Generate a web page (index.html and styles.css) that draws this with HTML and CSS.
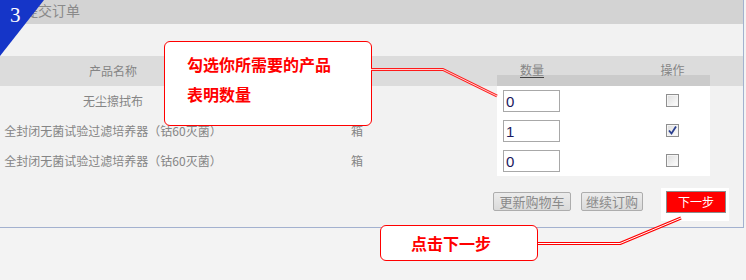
FILE: index.html
```html
<!DOCTYPE html>
<html lang="zh">
<head>
<meta charset="utf-8">
<title>提交订单</title>
<link rel="stylesheet" href="styles.css">
</head>
<body>
<div class="panel">
  <div class="topbar"><span class="step-title">提交订单</span></div>
  <div class="spacer"></div>
  <div class="grid">
    <div class="th name">产品名称</div>
    <div class="th unit"></div>
    <div class="th qty strip"><span class="ul">数量</span></div>
    <div class="th op strip">操作</div>
    <div class="th rest"></div>

    <div class="td name">无尘擦拭布</div>
    <div class="td unit">箱</div>
    <div class="td qty white"><input class="num" type="text" value="0"></div>
    <div class="td op white"><span class="cb"></span></div>
    <div class="td rest"></div>

    <div class="td name">全封闭无菌试验过滤培养器（钴60灭菌）</div>
    <div class="td unit">箱</div>
    <div class="td qty white"><input class="num" type="text" value="1"></div>
    <div class="td op white"><span class="cb checked"><svg width="11" height="11" viewBox="0 0 11 11"><path d="M2 5.5 L4.5 8.5 L9 1.5" fill="none" stroke="#2a3f8f" stroke-width="1.8"/></svg></span></div>
    <div class="td rest"></div>

    <div class="td name">全封闭无菌试验过滤培养器（钴60灭菌）</div>
    <div class="td unit">箱</div>
    <div class="td qty white"><input class="num" type="text" value="0"></div>
    <div class="td op white"><span class="cb"></span></div>
    <div class="td rest"></div>
  </div>
  <div class="footer">
    <button class="btn btn-update">更新购物车</button>
    <button class="btn btn-continue">继续订购</button>
    <div class="next-wrap"><button class="btn-next">下一步</button></div>
  </div>
</div>

<div class="badge"><span class="badge-num">3</span></div>

<div class="callout callout-1">勾选你所需要的产品<br>表明数量</div>
<div class="callout callout-2">点击下一步</div>

<svg class="connectors" width="746" height="280" viewBox="0 0 746 280">
  <path d="M371 69.5 L443 69.5 L497 96" fill="none" stroke="#ff1a1a" stroke-width="3" stroke-linejoin="round"/>
  <path d="M371 69.5 L443 69.5 L497 96" fill="none" stroke="#ffd0d0" stroke-width="1" stroke-linejoin="round"/>
  <path d="M538 243.5 L620 243.5 L681 218" fill="none" stroke="#ff0000" stroke-width="3" stroke-linejoin="round"/>
  <path d="M538 243.5 L620 243.5 L681 218" fill="none" stroke="#ffffff" stroke-width="1" stroke-linejoin="round"/>
</svg>
</body>
</html>
```

FILE: styles.css
```css
* { box-sizing: border-box; }
html, body {
  margin: 0;
  padding: 0;
  background: #f3f3f3;
  font-family: "Noto Sans CJK SC", "Noto Sans", sans-serif;
  color: #858585;
  font-size: 12px;
  width: 746px;
  height: 280px;
  overflow: hidden;
  position: relative;
}
.panel {
  width: 744px;
  height: 228px;
  background: #f2f2f2;
  border-right: 1px solid #a3b1cf;
  border-bottom: 1px solid #a3b1cf;
  display: flex;
  flex-direction: column;
}
.topbar {
  height: 24px;
  background: #d3d3d3;
  padding-left: 24px;
  line-height: 20px;
  font-size: 14px;
  color: #8a8a8a;
}
.spacer { height: 32px; }
.grid {
  display: grid;
  grid-template-columns: 226px 271px 138px 75px 33px;
  grid-template-rows: 30px 30px 30px 30px;
}
.th {
  background: #dcdcdc;
  line-height: 30px;
  height: 30px;
}
.th.name { text-align: center; }
.th.qty { padding-left: 23px; line-height: 28px; }
.th.op { text-align: center; line-height: 28px; }
.th.strip {
  background: linear-gradient(to bottom, #dcdcdc 0, #dcdcdc 19px, #cbcbcb 19px, #cbcbcb 100%);
}
.ul {
  text-decoration: underline;
  text-decoration-color: #444;
  text-underline-offset: 2px;
}
.td {
  height: 30px;
  line-height: 30px;
}
.td.name { text-align: center; white-space: nowrap; }
.td.unit { padding-left: 125px; }
.td.white { background: #ffffff; }
.td.qty { padding-left: 6px; padding-top: 4px; }
.td.op { display: flex; justify-content: center; padding-top: 8px; }
.num {
  display: block;
  width: 57px;
  height: 22px;
  border: 1px solid #a8a8a8;
  padding: 0 0 0 2px;
  margin: 0;
  font-family: "Liberation Sans", sans-serif;
  font-size: 15px;
  color: #1a1a60;
  background: #fff;
  outline: none;
}
.cb {
  width: 13px;
  height: 13px;
  border: 1px solid #8f8f8f;
  background: linear-gradient(135deg, #dcdcdc, #ffffff);
  box-shadow: inset 0 0 0 1px #f4f4f4;
  display: flex;
  align-items: center;
  justify-content: center;
}
.cb svg { display: block; }
.footer {
  flex: 1;
  display: flex;
  justify-content: flex-end;
  align-items: flex-start;
  padding-top: 12px;
  padding-right: 14px;
}
.btn {
  height: 19px;
  margin-top: 4px;
  padding: 0;
  border: 1px solid #adadad;
  border-radius: 2px;
  background: linear-gradient(to bottom, #ececec, #dadada);
  font-family: "Noto Sans CJK SC", sans-serif;
  font-size: 13px;
  line-height: 17px;
  color: #8a8a8a;
}
.btn-update { width: 78px; margin-right: 10px; }
.btn-continue { width: 62px; margin-right: 18px; }
.next-wrap {
  background: #ffffff;
  padding: 3px 3px 8px 5px;
}
.btn-next {
  display: block;
  width: 60px;
  height: 22px;
  padding: 0;
  border: 1px solid #8c8c8c;
  background: #ff0000;
  color: #ffffff;
  font-family: "Noto Sans CJK SC", sans-serif;
  font-size: 12px;
  line-height: 20px;
}
.badge {
  position: absolute;
  left: 0;
  top: 0;
  width: 44px;
  height: 56px;
  background: #1535c8;
  clip-path: polygon(0 0, 100% 0, 0 100%);
}
.badge-num {
  position: absolute;
  left: 10px;
  top: 2px;
  font-family: "Liberation Serif", serif;
  font-size: 21px;
  line-height: 26px;
  color: #ffffff;
}
.callout {
  position: absolute;
  background: #ffffff;
  border: 1px solid #ff0000;
  border-radius: 6px;
  color: #ff0000;
  font-weight: bold;
  font-size: 16px;
  font-family: "Noto Sans CJK SC", sans-serif;
}
.callout-1 {
  left: 164px;
  top: 41px;
  width: 208px;
  height: 85px;
  padding: 7px 0 0 22px;
  line-height: 30px;
}
.callout-2 {
  left: 380px;
  top: 225px;
  width: 158px;
  height: 36px;
  padding-left: 30px;
  line-height: 34px;
}
.connectors {
  position: absolute;
  left: 0;
  top: 0;
  pointer-events: none;
}
```
